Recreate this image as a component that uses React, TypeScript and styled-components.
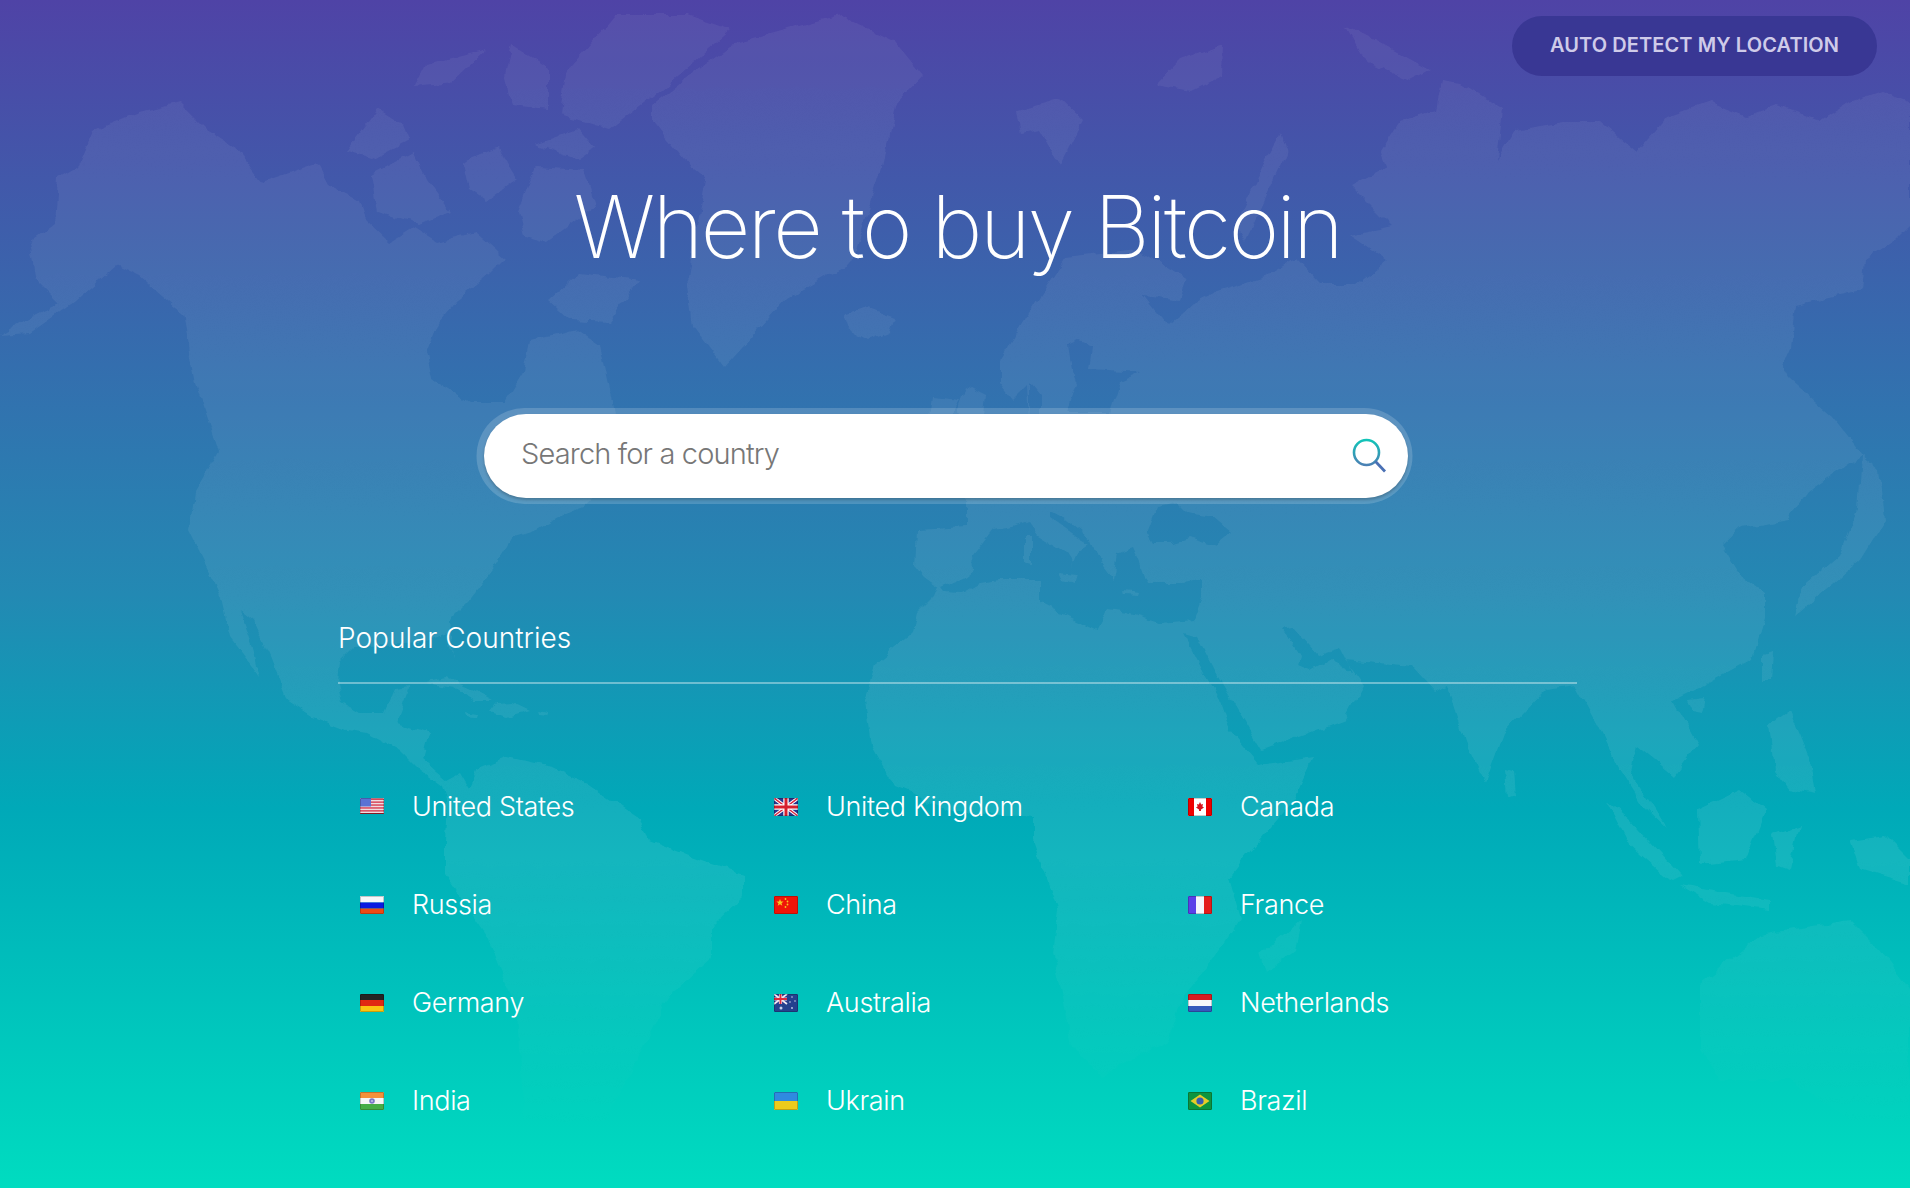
import React from 'react'
import styled, { createGlobalStyle } from 'styled-components'

const GlobalStyle = createGlobalStyle`
    html, body { margin: 0; padding: 0; }
    body { font-family: Inter, "Liberation Sans", sans-serif; }
`;

// land outlines, in page pixels
const LAND = [
    // the Americas
    "M0 335L37 314L60 303L37 280L30 242L55 224L58 178L80 165L94 131L140 112L180 102L207 129L234 146L262 182L317 163L329 186L359 201L365 218L390 242L414 227L438 242L475 232L505 258L487 276L457 300L438 322L426 352L432 379L469 402L505 402L524 371L530 341L578 330L600 345L612 400L622 470L583 507L567 513L537 530L513 537L493 570L467 603L450 620L453 660L447 633L420 643L353 647L340 660L338 683L343 703L360 713L383 713L393 690L410 688L397 723L430 733L423 760L447 780L460 773L470 790L480 767L507 757L553 767L587 783L637 817L650 840L688 855L743 874L743 897L712 927L712 958L670 995L627 1079L603 1124L579 1147L545 1150L524 1124L518 1011L487 935L445 874L445 840L447 800L443 787L420 770L400 750L367 733L347 730L313 717L287 700L270 657L253 620L240 610L253 647L260 677L230 637L220 593L189 530L195 492L219 451L195 379L183 314L140 277L116 265L73 303L30 333Z",
    // Cuba, Hispaniola, Jamaica, Puerto Rico
    "M427 682L447 678L473 690L492 700L473 700L453 687Z",
    "M497 703L513 702L530 710L507 717L490 712Z",
    "M465 711L477 713L476 716L466 715Z",
    "M537 711L548 713L547 716L538 715Z",
    // Greenland
    "M652 106L694 72L731 45L840 15L895 42L923 76L895 106L883 163L853 261L786 299L725 367L694 326L688 277L706 178L682 159L652 121Z",
    // Iceland
    "M843 315L865 307L895 318L890 332L868 341L848 330Z",
    // Arctic islands
    "M347 152L378 110L402 125L408 140L372 159Z",
    "M372 174L414 152L426 178L451 212L420 224L378 212Z",
    "M463 163L499 148L518 178L487 201L469 189Z",
    "M518 212L536 167L585 170L597 205L548 242L524 235Z",
    "M536 144L578 129L594 148L578 159Z",
    "M566 72L615 15L688 15L731 30L670 83L609 129L560 114Z",
    "M426 64L487 49L451 83L414 87Z",
    "M512 45L548 68L548 110L512 106L505 76Z",
    "M548 300L578 273L640 280L609 322L570 320Z",
    // Africa and Eurasia in one outline, inner seas cut out with evenodd
    "M937 587L933 597L917 613L912 633L900 643L877 662L865 700L871 745L895 787L955 812L1034 817L1034 840L1058 908L1052 954L1065 1011L1071 1048L1101 1075L1168 1041L1186 992L1223 946L1241 920L1229 878L1247 855L1296 798L1314 757L1259 765L1230 730L1220 700L1205 675L1183 633L1197 637L1215 672L1232 700L1262 750L1345 719L1363 685L1345 660L1412 666L1436 692L1448 685L1465 740L1485 783L1503 734L1546 689L1576 685L1597 723L1620 770L1643 806L1667 829L1631 772L1637 745L1674 776L1698 745L1674 700L1704 685L1753 658L1765 617L1765 594L1741 576L1722 545L1741 527L1789 519L1808 492L1862 455L1832 417L1789 379L1783 367L1790 350L1795 305L1862 290L1865 260L1895 240L1910 225L1910 102L1881 91L1850 102L1820 121L1777 106L1747 117L1710 102L1667 117L1637 152L1600 121L1564 121L1515 129L1497 159L1503 110L1460 83L1442 80L1436 110L1400 121L1381 151L1387 167L1351 186L1392 227L1350 236L1387 261L1357 284L1321 284L1296 258L1265 277L1216 292L1193 303L1168 326L1144 295L1180 300L1186 280L1138 250L1065 258L1040 295L1000 360L1000 383L1013 400L1028 385L1030 420L985 452L952 460L966 480L966 527L917 530L915 567L923 577Z M940 588L963 578L973 570L972 557L993 530L1013 527L1028 522L1038 535L1067 553L1073 562L1070 570L1077 553L1090 543L1073 533L1050 517L1050 510L1063 517L1092 540L1100 563L1113 580L1117 553L1133 547L1140 563L1147 583L1183 583L1202 580L1202 597L1193 620L1160 623L1127 613L1107 610L1097 630L1070 617L1040 603L1040 580L1023 580L1000 580L980 583L963 593L943 592Z M1147 533L1157 507L1177 503L1187 513L1213 517L1232 533L1217 545L1190 537L1170 543L1153 543Z M1283 630L1293 628L1317 655L1340 648L1352 672L1340 668L1330 658L1310 670L1298 665L1300 657Z M1068 345L1080 340L1093 345L1090 370L1140 373L1120 382L1110 413L1067 413L1077 383L1072 370Z M1030 383L1040 395L1040 420L1030 420Z",
    // Med islands
    "M1025 535L1032 535L1032 565L1025 563Z",
    "M1058 572L1076 574L1073 584L1062 580Z",
    "M1123 591L1140 593L1139 596L1124 595Z",
    // Madagascar
    "M1302 920L1296 950L1266 973L1260 954L1284 935Z",
    // UK and Ireland
    "M965 385L985 395L982 425L992 445L955 452L968 425L958 410Z",
    "M933 397L960 400L952 415L930 418Z",
    // northern islands
    "M1016 110L1060 98L1083 120L1060 165L1040 130L1020 135Z",
    "M1156 85L1180 60L1223 45L1222 75L1190 91Z",
    "M1265 160L1280 133L1287 150L1265 200L1245 242L1235 225Z",
    "M1345 25L1375 40L1430 70L1410 80L1365 60Z",
    // Asian islands
    "M1862 455L1880 470L1885 520L1860 560L1825 590L1795 615L1800 590L1840 555L1858 510Z",
    "M1763 655L1772 652L1770 680L1763 680Z",
    "M1688 700L1705 698L1702 712L1692 710Z",
    "M1506 770L1514 772L1516 795L1508 798Z",
    "M1607 800L1630 820L1680 875L1670 880L1630 845Z",
    "M1698 810L1740 790L1765 810L1745 860L1700 865Z",
    "M1680 885L1720 892L1770 900L1770 910L1710 903Z",
    "M1772 835L1800 825L1790 870L1776 865Z",
    "M1770 725L1790 710L1810 760L1815 795L1790 790L1775 770Z",
    "M1850 840L1885 835L1910 860L1910 885L1860 870Z",
    // Australia
    "M1700 985L1760 935L1820 925L1850 920L1880 950L1910 990L1910 1150L1850 1120L1790 1080L1720 1080L1700 1050Z"
];

const Flag = ({ code }: { code: string }) => (
    <FlagSvg viewBox="0 0 24 18">
        {code === 'us' && <>
            <rect width="24" height="16" fill="#f0dcdf" />
            {[0.5, 3.4, 6.3, 9.2, 12.1].map((y) => <rect key={y} y={y} width="24" height="1.5" fill="#d9475c" />)}
            <rect width="11" height="8.5" fill="#5a72d4" />
            <rect y="15" width="24" height="1" fill="#a8202e" />
        </>}
        {code === 'gb' && <>
            <rect width="24" height="18" fill="#27358f" />
            <path d="M0 0L24 18M24 0L0 18" stroke="#fff" strokeWidth="3.4" />
            <path d="M0 0L24 18M24 0L0 18" stroke="#d6253f" strokeWidth="1.4" />
            <path d="M12 0V18M0 9H24" stroke="#fff" strokeWidth="5.4" />
            <path d="M12 0V18M0 9H24" stroke="#d6202f" strokeWidth="3" />
        </>}
        {code === 'ca' && <>
            <rect width="24" height="18" fill="#fff" />
            <rect width="6" height="18" fill="#ee0000" />
            <rect x="18" width="6" height="18" fill="#ee0000" />
            <path d="M12 4L13.2 6.5L15 6L14.4 8.5L16 9.5L13 11.6V13H11V11.6L8 9.5L9.6 8.5L9 6L10.8 6.5Z" fill="#d8121c" />
        </>}
        {code === 'ru' && <>
            <rect width="24" height="6.5" fill="#f7f7fa" />
            <rect y="6.5" width="24" height="6" fill="#0a1ae0" />
            <rect y="12.5" width="24" height="5.5" fill="#ee4a14" />
        </>}
        {code === 'cn' && <>
            <rect width="24" height="18" fill="#f01408" />
            <path d="M6 3L7 5.6H9.6L7.5 7.2L8.3 9.8L6 8.2L3.7 9.8L4.5 7.2L2.4 5.6H5Z" fill="#f6c820" />
            <circle cx="11.5" cy="3" r="0.9" fill="#f6c820" />
            <circle cx="13.5" cy="5.5" r="0.9" fill="#f6c820" />
            <circle cx="13.5" cy="8.5" r="0.9" fill="#f6c820" />
            <circle cx="11.5" cy="11" r="0.9" fill="#f6c820" />
        </>}
        {code === 'fr' && <>
            <rect width="8" height="18" fill="#5a41e8" />
            <rect x="8" width="8" height="18" fill="#f4f6fc" />
            <rect x="16" width="8" height="18" fill="#e41c1c" />
        </>}
        {code === 'de' && <>
            <rect width="24" height="6" fill="#242424" />
            <rect y="6" width="24" height="6" fill="#e12a12" />
            <rect y="12" width="24" height="6" fill="#fbc512" />
        </>}
        {code === 'au' && <>
            <rect width="24" height="18" fill="#24418e" />
            <rect width="13" height="10" fill="#27358f" />
            <path d="M0 0L13 10M13 0L0 10" stroke="#f0e8f0" strokeWidth="1.8" />
            <path d="M6.5 0V10M0 5H13" stroke="#f0e8f0" strokeWidth="3.2" />
            <path d="M6.5 0V10M0 5H13" stroke="#e0283c" strokeWidth="1.8" />
            <circle cx="7" cy="14" r="1.5" fill="#c8d0ec" />
            <circle cx="18" cy="3" r="0.8" fill="#c8d0ec" />
            <circle cx="21" cy="7" r="0.8" fill="#c8d0ec" />
            <circle cx="16" cy="8" r="0.8" fill="#c8d0ec" />
            <circle cx="18" cy="14" r="0.9" fill="#c8d0ec" />
        </>}
        {code === 'nl' && <>
            <rect width="24" height="6" fill="#d81c22" />
            <rect y="6" width="24" height="6" fill="#f6f6fa" />
            <rect y="12" width="24" height="6" fill="#3458bc" />
        </>}
        {code === 'in' && <>
            <rect width="24" height="6" fill="#f4913a" />
            <rect y="6" width="24" height="6" fill="#f6f6f6" />
            <rect y="12" width="24" height="6" fill="#46ad46" />
            <circle cx="12" cy="9" r="2.8" fill="#7a78c8" />
            <circle cx="12" cy="9" r="1" fill="#c4c4ec" />
        </>}
        {code === 'ua' && <>
            <rect width="24" height="9" fill="#2f8ae0" />
            <rect y="9" width="24" height="9" fill="#edcb1c" />
        </>}
        {code === 'br' && <>
            <rect width="24" height="18" fill="#0d9440" />
            <path d="M12 2.5L21.5 9L12 15.5L2.5 9Z" fill="#e8cc28" />
            <circle cx="12" cy="9" r="3.6" fill="#3a5cb0" />
        </>}
        <rect x="0.5" y="0.5" width="23" height={code === 'us' ? 15 : 17} rx="1" fill="none" stroke="rgba(0,0,0,0.2)" />
    </FlagSvg>
);

const COUNTRIES = [
    { code: 'us', name: 'United States' },
    { code: 'gb', name: 'United Kingdom' },
    { code: 'ca', name: 'Canada' },
    { code: 'ru', name: 'Russia' },
    { code: 'cn', name: 'China' },
    { code: 'fr', name: 'France' },
    { code: 'de', name: 'Germany' },
    { code: 'au', name: 'Australia' },
    { code: 'nl', name: 'Netherlands' },
    { code: 'in', name: 'India' },
    { code: 'ua', name: 'Ukrain' },
    { code: 'br', name: 'Brazil' },
];

const App = () => {
    return (
        <Page>
            <GlobalStyle />
            <MapSvg viewBox="0 0 1910 1188" preserveAspectRatio="none">
                <defs>
                    <linearGradient id="landFade" gradientUnits="userSpaceOnUse" x1="0" y1="0" x2="0" y2="1188">
                        <stop offset="0" stopColor="#fff" stopOpacity="0.055" />
                        <stop offset="0.4" stopColor="#fff" stopOpacity="0.065" />
                        <stop offset="0.72" stopColor="#fff" stopOpacity="0.08" />
                        <stop offset="0.86" stopColor="#fff" stopOpacity="0.025" />
                        <stop offset="0.95" stopColor="#fff" stopOpacity="0" />
                    </linearGradient>
                    {/* roughens the coastlines */}
                    <filter id="coast" filterUnits="userSpaceOnUse" x="0" y="0" width="1910" height="1188" colorInterpolationFilters="sRGB">
                        <feTurbulence type="fractalNoise" baseFrequency="0.06" numOctaves="3" seed="4" result="noise" />
                        <feDisplacementMap in="SourceGraphic" in2="noise" scale="9" xChannelSelector="R" yChannelSelector="G" />
                    </filter>
                </defs>
                <g filter="url(#coast)">
                    {LAND.map((d, index) => (
                        <path key={index} d={d} fill="url(#landFade)" fillRule="evenodd" />
                    ))}
                </g>
            </MapSvg>

            <Header>
                <DetectButton>AUTO DETECT MY LOCATION</DetectButton>
            </Header>

            <Main>
                <Title>Where to buy Bitcoin</Title>

                <SearchBox>
                    <SearchInput placeholder="Search for a country" />
                    <svg width="36" height="36" viewBox="0 0 36 36" fill="none">
                        <defs>
                            <linearGradient id="searchStroke" x1="0" y1="0" x2="0" y2="1">
                                <stop offset="0" stopColor="#12c4b8" />
                                <stop offset="1" stopColor="#4a80b4" />
                            </linearGradient>
                        </defs>
                        <circle cx="15.5" cy="14.5" r="12.5" stroke="url(#searchStroke)" strokeWidth="2.6" />
                        <path d="M24.5 23.5L34 33.5" stroke="#4a70b4" strokeWidth="2.8" />
                    </svg>
                </SearchBox>

                <SectionTitle>Popular Countries</SectionTitle>

                <CountryGrid>
                    {COUNTRIES.map((country) => (
                        <CountryItem key={country.code}>
                            <Flag code={country.code} />
                            <CountryName>{country.name}</CountryName>
                        </CountryItem>
                    ))}
                </CountryGrid>
            </Main>
        </Page>
    );
}

export default App;

// CSS
const Page = styled.div`
    position: relative;
    width: 100%;
    height: 1188px;
    overflow: hidden;
    background: linear-gradient(180deg, #4f43a6 0%, #2389b3 50%, #00a9b8 68%, #00dcc0 100%);
`;

const MapSvg = styled.svg`
    position: absolute;
    top: 0;
    left: 0;
    width: 100%;
    height: 100%;
`;

const Header = styled.header`
    position: relative;
    display: flex;
    justify-content: flex-end;
    padding: 16px 33px 0 0;
`;

const DetectButton = styled.button`
    width: 365px;
    height: 60px;
    padding: 0 0 2px 0;
    border: none;
    border-radius: 30px;
    background-color: #393794;
    color: #cfcbe9;
    font-family: Inter, "Liberation Sans", sans-serif;
    font-size: 20px;
    font-weight: 600;
    letter-spacing: 0.1px;
`;

const Main = styled.main`
    position: relative;
    width: 1239px;
    margin-left: 338px;
`;

const Title = styled.h1`
    margin: 101px 0 0 0;
    height: 100px;
    line-height: 100px;
    text-align: center;
    font-size: 86px;
    font-weight: 200;
    letter-spacing: -2.5px;
    color: #fff;
`;

const SearchBox = styled.div`
    display: flex;
    align-items: center;
    width: 924px;
    height: 84px;
    margin: 137px 0 0 146px;
    padding: 0 21px 0 37px;
    box-sizing: border-box;
    border-radius: 42px;
    background-color: #fff;
    box-shadow: 0 2px 3px rgba(0, 0, 0, 0.22), -1.5px 0 0 6px rgba(255, 255, 255, 0.17);
`;

const SearchInput = styled.input`
    flex: 1;
    padding: 0 0 6px 0;
    border: none;
    outline: none;
    background: transparent;
    font-family: Inter, "Liberation Sans", sans-serif;
    font-size: 29px;
    font-weight: 300;
    letter-spacing: -0.85px;
    color: #777;

    &::placeholder {
        color: #777;
        opacity: 1;
    }
`;

const SectionTitle = styled.h2`
    margin: 118px 0 0 0;
    padding-bottom: 22px;
    height: 44px;
    line-height: 44px;
    border-bottom: 2px solid rgba(255, 255, 255, 0.38);
    font-size: 28px;
    font-weight: 300;
    color: #fff;
`;

const CountryGrid = styled.ul`
    display: grid;
    grid-template-columns: repeat(3, 414px);
    grid-auto-rows: 98px;
    margin: 73px 0 0 0;
    padding: 0;
    list-style: none;
`;

const CountryItem = styled.li`
    display: flex;
    align-items: center;
    padding-left: 22px;
`;

const FlagSvg = styled.svg`
    flex: none;
    width: 24px;
    height: 18px;
    margin: 2px 28px 0 0;
    border-radius: 1px;
`;

const CountryName = styled.span`
    font-size: 27px;
    font-weight: 300;
    letter-spacing: -0.35px;
    color: #fff;
`;
